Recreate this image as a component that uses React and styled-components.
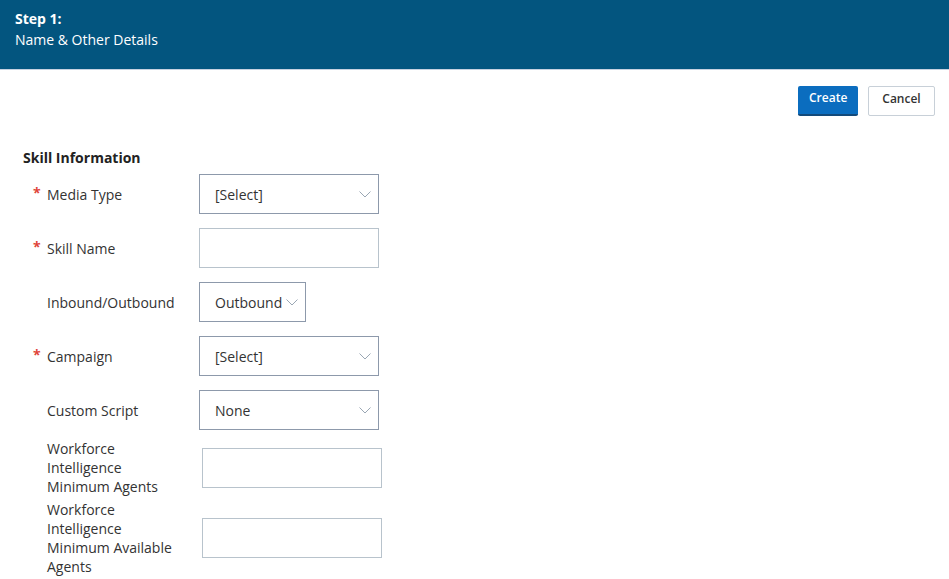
import React from "react";
import styled, { createGlobalStyle } from "styled-components";

const Global = createGlobalStyle`
  html, body { margin: 0; padding: 0; background: #fff; }
  body { font-family: "Open Sans", "Noto Sans", Arial, sans-serif; color: #333; }
`;

const Page = styled.div`
  width: 949px;
  min-height: 579px;
  overflow: hidden;
`;

const Header = styled.header`
  background: #03557f;
  height: 70px;
  box-sizing: border-box;
  padding: 10px 15px 0;
  color: #fff;
  border-bottom: 1px solid #c6d1e0;
`;

const StepTitle = styled.div`
  font-size: 14px;
  font-weight: 700;
  line-height: 18px;
`;

const StepName = styled.div`
  font-size: 14px;
  line-height: 24px;
`;

const Toolbar = styled.div`
  display: flex;
  justify-content: flex-end;
  gap: 10px;
  padding: 16px 14px 0 0;
`;

const Button = styled.button`
  font-family: inherit;
  font-size: 12px;
  height: 30px;
  box-sizing: border-box;
  border-radius: 2px;
  cursor: pointer;
  padding: 0 11px 5px;
  ${({ $primary }) =>
    $primary
      ? `
    background: #0b6dbf;
    color: #fff;
    font-weight: 600;
    border: none;
    border-bottom: 2px solid #134a7a;
    width: 60px;
    padding-bottom: 6px;
  `
      : `
    background: #fff;
    color: #333;
    border: 1px solid #c8d0d8;
    width: 67px;
    font-weight: 600;
  `}
`;

const Section = styled.section`
  padding: 32px 0 0 23px;
`;

const SectionTitle = styled.h3`
  margin: 0 0 7px;
  font-size: 14px;
  font-weight: 700;
  line-height: 19px;
  color: #222;
`;

const Rows = styled.div`
  display: flex;
  flex-direction: column;
  gap: 14px;
`;

const Row = styled.div`
  display: grid;
  grid-template-columns: 24px 152px auto;
  align-items: center;
  min-height: 40px;
  margin-top: ${({ $pull }) => ($pull ? `-${$pull}px` : "0")};
`;

const Star = styled.span`
  color: #e0453a;
  font-size: 14px;
  font-weight: 700;
  padding-left: 10px;
  line-height: 1;
  position: relative;
  top: -1px;
`;

const Label = styled.label`
  font-size: 14px;
  line-height: 19px;
  color: #333;
  width: 130px;
`;

const SelectBox = styled.div`
  box-sizing: border-box;
  width: ${({ $w }) => $w || 180}px;
  height: 40px;
  border: 1px solid #8d99ab;
  display: flex;
  align-items: center;
  justify-content: space-between;
  padding: 0 7px 0 15px;
  font-size: 14px;
  color: #333;
  background: #fff;
`;

const TextBox = styled.input`
  box-sizing: border-box;
  width: 180px;
  height: 40px;
  border: 1px solid #b8c3cc;
  background: #fff;
  margin: 0 0 0 ${({ $shift }) => $shift || 0}px;
  padding: 0 10px;
  font-family: inherit;
  font-size: 14px;
  outline: none;
`;

const Chevron = () => (
  <svg width="12" height="7" viewBox="0 0 12 7" fill="none">
    <path d="M0.5 0.5l5.5 5.5 5.5-5.5" stroke="#9aa7b4" strokeWidth="1" />
  </svg>
);

const Select = ({ value, width }) => (
  <SelectBox $w={width}>
    <span>{value}</span>
    <Chevron />
  </SelectBox>
);

const fields = [
  { label: "Media Type", required: true, kind: "select", value: "[Select]" },
  { label: "Skill Name", required: true, kind: "text" },
  { label: "Inbound/Outbound", kind: "select", value: "Outbound", width: 107 },
  { label: "Campaign", required: true, kind: "select", value: "[Select]" },
  { label: "Custom Script", kind: "select", value: "None" },
  { label: "Workforce Intelligence Minimum Agents", kind: "text", shift: 3, pull: 5 },
  { label: "Workforce Intelligence Minimum Available Agents", kind: "text", shift: 3, pull: 10 },
];

export default function App() {
  return (
    <Page>
      <Global />
      <Header>
        <StepTitle>Step 1:</StepTitle>
        <StepName>Name &amp; Other Details</StepName>
      </Header>
      <Toolbar>
        <Button $primary>Create</Button>
        <Button>Cancel</Button>
      </Toolbar>
      <Section>
        <SectionTitle>Skill Information</SectionTitle>
        <Rows>
          {fields.map((f) => (
            <Row key={f.label} $pull={f.pull}>
              <Star>{f.required ? "*" : ""}</Star>
              <Label>{f.label}</Label>
              {f.kind === "select" ? (
                <Select value={f.value} width={f.width} />
              ) : (
                <TextBox $shift={f.shift} />
              )}
            </Row>
          ))}
        </Rows>
      </Section>
    </Page>
  );
}
